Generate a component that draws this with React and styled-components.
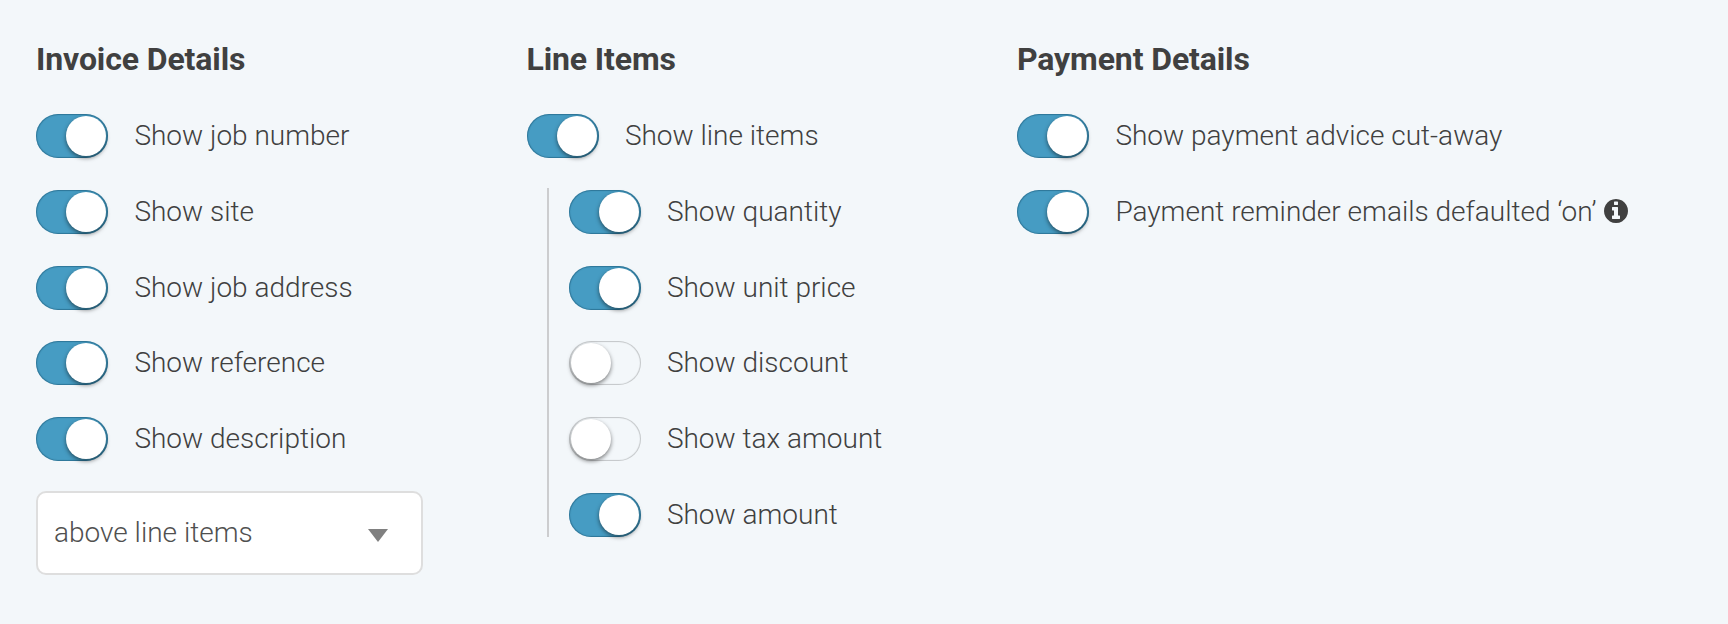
import React, { useState } from 'react';
import styled, { createGlobalStyle } from 'styled-components';

const GlobalStyle = createGlobalStyle`
    * {
        box-sizing: border-box;
    }
    body {
        margin: 0;
        background: #f3f7fa;
        font-family: Roboto, sans-serif;
        color: #404040;
    }
`;

const Settings = styled.main`
    display: grid;
    grid-template-columns: 490.5px 490.5px 1fr;
    min-height: 624px;
    padding: 39px 36px 0;
`;

const Column = styled.section`
    display: flex;
    flex-direction: column;
    align-items: flex-start;
`;

const Title = styled.h2`
    margin: 0 0 35px;
    font-size: 32px;
    line-height: 40px;
    font-weight: 700;
    letter-spacing: -0.12px;
    white-space: nowrap;
`;

const Row = styled.label`
    display: flex;
    align-items: center;
    height: 44px;
    margin-bottom: 31.8px;
    cursor: pointer;
`;

const Track = styled.button`
    display: flex;
    flex: none;
    justify-content: ${props => (props.$on ? 'flex-end' : 'flex-start')};
    width: 72px;
    height: 44px;
    margin: 0 26.4px 0 0;
    padding: 2px;
    border: 0;
    border-radius: 22px;
    background: ${props => (props.$on ? '#469cc3' : 'transparent')};
    box-shadow: inset 0 0 1px 1px ${props => (props.$on ? 'rgba(20,80,110,.5)' : 'rgba(0,0,0,.2)')};
    cursor: pointer;
`;

const Knob = styled.span`
    width: 40px;
    height: 40px;
    border-radius: 50%;
    background: #fff;
    box-shadow: 0 2px 4px rgba(0,0,0,.5);
`;

const Label = styled.span`
    font-size: 28px;
    line-height: 40px;
    font-weight: 300;
    white-space: nowrap;
`;

const Nested = styled.div`
    margin: -2px 0 0 20px;
    padding: 2px 0 0 20px;
    border-left: 2px solid #cccdcf;

    ${Row}:last-child {
        margin-bottom: 0;
    }
`;

const Icon = styled.svg`
    width: 24px;
    height: 24px;
    margin-left: 7px;
    margin-top: -1px;
    fill: currentColor;
`;

const Select = styled.button`
    display: flex;
    align-items: center;
    justify-content: space-between;
    width: 387px;
    height: 84px;
    margin-top: -2px;
    padding: 0 33px 0 16px;
    border: 2px solid #dedede;
    border-radius: 10px;
    background: #fff;
    color: #505050;
    font-family: inherit;
    cursor: pointer;
`;

const Caret = styled.span`
    margin-top: 5px;
    border-top: 13px solid #808080;
    border-left: 10.5px solid transparent;
    border-right: 10.5px solid transparent;
`;

function InfoIcon() {
    return (
        <Icon viewBox="128 128 1536 1536">
            <path d="M1152 1376v-160q0-14-9-23t-23-9h-96v-512q0-14-9-23t-23-9h-320q-14 0-23 9t-9 23v160q0 14 9 23t23 9h96v320h-96q-14 0-23 9t-9 23v160q0 14 9 23t23 9h448q14 0 23-9t9-23zm-128-896v-160q0-14-9-23t-23-9h-192q-14 0-23 9t-9 23v160q0 14 9 23t23 9h192q14 0 23-9t9-23zm640 416q0 209-103 385.5t-279.5 279.5-385.5 103-385.5-103-279.5-279.5-103-385.5 103-385.5 279.5-279.5 385.5-103 385.5 103 279.5 279.5 103 385.5z" />
        </Icon>
    );
}

function Toggle({ label, off, children }) {
    const [on, setOn] = useState(!off);

    return (
        <Row>
            <Track type="button" role="switch" aria-checked={on} $on={on} onClick={() => setOn(!on)}>
                <Knob />
            </Track>
            <Label>{label}</Label>
            {children}
        </Row>
    );
}

export default function App() {
    return (
        <>
            <GlobalStyle />
            <Settings>
                <Column>
                    <Title>Invoice Details</Title>
                    <Toggle label="Show job number" />
                    <Toggle label="Show site" />
                    <Toggle label="Show job address" />
                    <Toggle label="Show reference" />
                    <Toggle label="Show description" />
                    <Select type="button">
                        <Label>above line items</Label>
                        <Caret />
                    </Select>
                </Column>
                <Column>
                    <Title>Line Items</Title>
                    <Toggle label="Show line items" />
                    <Nested>
                        <Toggle label="Show quantity" />
                        <Toggle label="Show unit price" />
                        <Toggle label="Show discount" off />
                        <Toggle label="Show tax amount" off />
                        <Toggle label="Show amount" />
                    </Nested>
                </Column>
                <Column>
                    <Title>Payment Details</Title>
                    <Toggle label="Show payment advice cut-away" />
                    <Toggle label="Payment reminder emails defaulted ‘on’">
                        <InfoIcon />
                    </Toggle>
                </Column>
            </Settings>
        </>
    );
}
